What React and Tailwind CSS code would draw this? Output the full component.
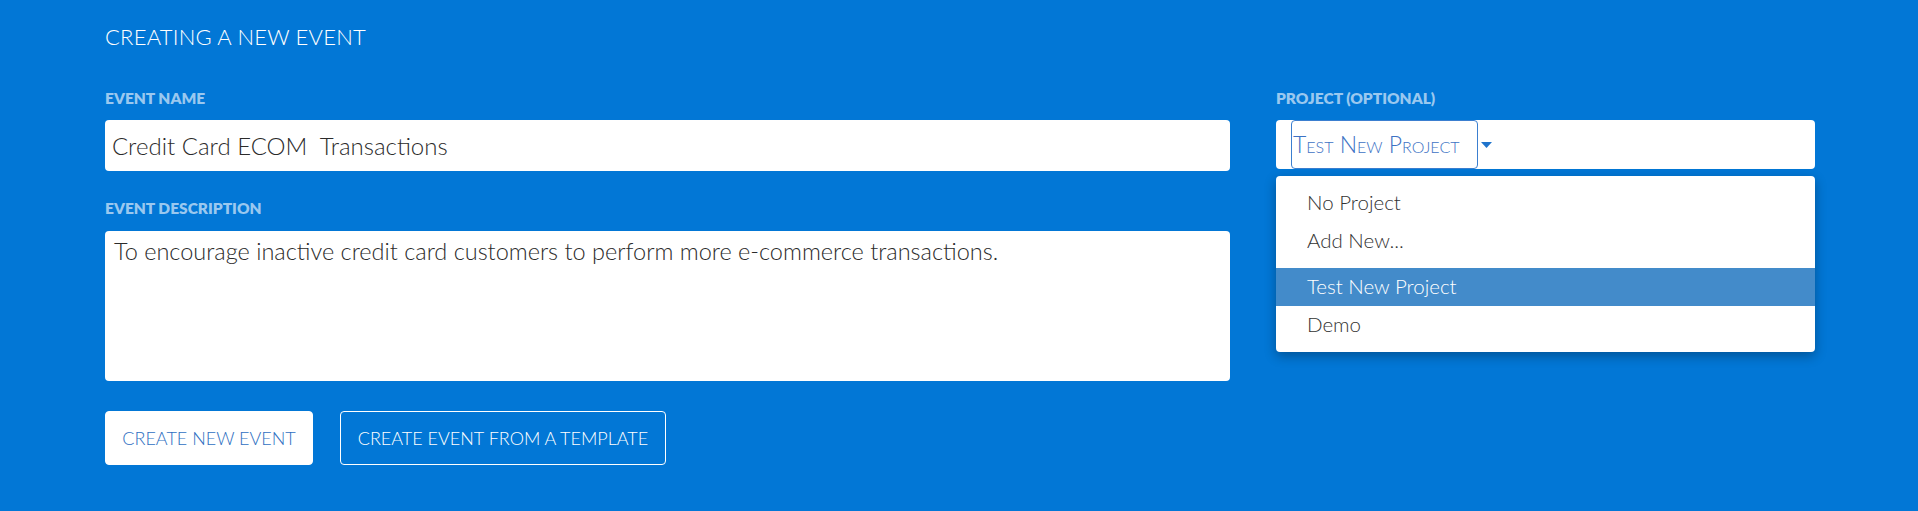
const projects = ["No Project", "Add New...", null, "Test New Project", "Demo"];

function Label({ children, className = "" }) {
  return (
    <label className={`block text-[15.5px] font-extrabold leading-[15px] text-[#9ac8ef] ${className}`}>
      {children}
    </label>
  );
}

export default function App() {
  return (
    <div className="min-h-[511px] bg-[#0277d6] pl-[105px] pr-[103px] pt-[26px] font-['Lato',sans-serif]">
      <h2 className="text-[22px] font-light leading-[22px] tracking-[0.01em] text-white">CREATING A NEW EVENT</h2>

      <div className="mt-[43px] flex gap-[46px]">
        <div className="flex-1">
          <Label>EVENT NAME</Label>
          <input
            readOnly
            defaultValue="Credit Card ECOM  Transactions"
            className="mt-[14px] block h-[51px] w-full rounded-[4px] bg-white px-[7px] text-[24px] font-light text-[#2b2b2b] outline-none"
          />

          <Label className="mt-[30px]">EVENT DESCRIPTION</Label>
          <textarea
            readOnly
            defaultValue="To encourage inactive credit card customers to perform more e-commerce transactions."
            className="mt-[15px] block h-[150px] w-full resize-none rounded-[4px] bg-white px-[9px] pt-[5px] text-[23.5px] font-light leading-[30px] text-[#2b2b2b] outline-none"
          />

          <div className="mt-[30px] flex gap-[27px]">
            <button className="flex h-[54px] w-[208px] items-center justify-center rounded-[4px] border border-white bg-white text-[18px] font-light text-[#2f6fc2]">
              CREATE NEW EVENT
            </button>
            <button className="flex h-[54px] w-[326px] items-center justify-center rounded-[4px] border border-white text-[18px] font-light text-white">
              CREATE EVENT FROM A TEMPLATE
            </button>
          </div>
        </div>

        <div className="w-[539px]">
          <Label>PROJECT (OPTIONAL)</Label>
          <div className="relative mt-[14px]">
            <div className="flex h-[49px] items-center rounded-[4px] bg-white pl-[15px]">
              <div className="flex h-full items-center rounded-[4px] border border-[#3b7fd0] pl-[1px] pr-[18px] text-[23px] font-light text-[#3d72c4] [font-variant:small-caps]">
                Test New Project
              </div>
              <svg width="11" height="6" viewBox="0 0 11 6" className="ml-[3px]">
                <path d="M0 0h11L5.5 6z" fill="#1f74cc" />
              </svg>
            </div>

            <ul className="absolute left-0 right-0 top-[56px] rounded-[4px] bg-white py-[8px] shadow-[0_4px_12px_rgba(0,0,0,0.3)]">
              {projects.map((p, i) =>
                p === null ? (
                  <li key={i} className="h-[8px]" />
                ) : (
                  <li
                    key={i}
                    className={`h-[38px] px-[31px] text-[20.5px] font-light leading-[36px] ${
                      p === "Test New Project" ? "bg-[#438bca] text-white" : "text-[#333]"
                    }`}
                  >
                    {p}
                  </li>
                )
              )}
            </ul>
          </div>
        </div>
      </div>
    </div>
  );
}
